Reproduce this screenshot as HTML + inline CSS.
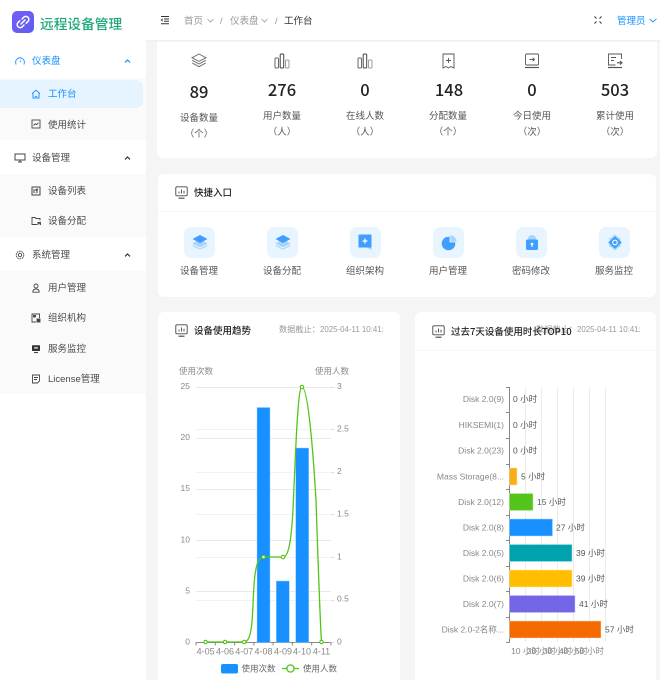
<!DOCTYPE html>
<html lang="zh-CN">
<head>
<meta charset="utf-8">
<title>远程设备管理</title>
<style>
*{box-sizing:border-box}
html,body{margin:0;padding:0}
body{width:660px;height:680px;overflow:hidden;position:relative;background:#fff;font-family:"Liberation Sans","Noto Sans CJK SC",sans-serif;font-size:9.5px;color:#4a4a4a}
.a{position:absolute}
.t{position:absolute;white-space:nowrap;line-height:14px;height:14px;margin-top:2px}
.c{position:absolute;white-space:nowrap;line-height:14px;height:14px;width:80px;text-align:center;margin-top:2px}
.card{position:absolute;background:#fff;border-radius:6px}
.q{position:absolute;top:227px;width:31px;height:31px;border-radius:7px;background:#e8f5ff}
svg{position:absolute;overflow:visible}
.num{position:absolute;width:80px;text-align:center;font-size:16.5px;line-height:20px;color:#222;font-weight:500;font-family:"Noto Sans CJK SC","Liberation Sans",sans-serif}
.lb{color:#555}
.bold{font-weight:500;color:#222;font-family:"Noto Sans CJK SC","Liberation Sans",sans-serif}
.d{font-size:7.9px}
</style>
</head>
<body>
<!-- main bg -->
<div class="a" style="left:146px;top:0;width:514px;height:680px;background:#f5f5f5"></div>
<!-- header -->
<div class="a" style="left:146px;top:0;width:514px;height:41px;background:#fff;border-bottom:1px solid #f0f0f0"></div>

<!-- sidebar -->
<div class="a" style="left:0;top:78px;width:146px;height:62px;background:#fafafa"></div>
<div class="a" style="left:0;top:174px;width:146px;height:63px;background:#fafafa"></div>
<div class="a" style="left:0;top:271px;width:146px;height:123px;background:#fafafa"></div>
<div class="a" style="left:0;top:80px;width:143px;height:28px;background:#e6f4ff;border-radius:0 7px 7px 0"></div>

<!-- logo -->
<div class="a" style="left:12px;top:11px;width:22px;height:22px;border-radius:5px;background:linear-gradient(135deg,#7a5cf5,#5a5ff0)"></div>
<svg style="left:12px;top:11px" width="22" height="22" viewBox="0 0 22 22" fill="none" stroke="#fff" stroke-width="1.5" stroke-linecap="round"><path d="M10 8l2-2a3 3 0 0 1 4.2 4.2l-2 2"/><path d="M12 14l-2 2a3 3 0 0 1-4.2-4.2l2-2"/><path d="M9 13l4-4"/></svg>
<div class="t" style="left:40px;top:14px;font-size:13.7px;font-weight:500;color:#1fa878;font-family:'Noto Sans CJK SC',sans-serif">远程设备管理</div>

<!-- sidebar icons -->
<svg style="left:15px;top:56px" width="10" height="10" viewBox="0 0 10 10" fill="none" stroke="#1890ff" stroke-width=".9"><path d="M1.2 8.500A4.400 4.400 0 1 1 8.800 8.500"/><path d="M5 6l1.200-1.600"/></svg>
<div class="t" style="left:32px;top:53px;color:#1890ff">仪表盘</div>
<svg style="left:124px;top:59px" width="7" height="4" viewBox="0 0 7 4" fill="none" stroke="#1890ff" stroke-width="1.200"><path d="M1 3.400L3.500 1 6 3.400"/></svg>

<svg style="left:31px;top:89px" width="10" height="10" viewBox="0 0 10 10" fill="none" stroke="#1890ff" stroke-width=".9"><path d="M1 4.600L5 1.200l4 3.400"/><path d="M2 4.400V9h6V4.400"/><path d="M3.800 7.400h2.400"/></svg>
<div class="t" style="left:48px;top:86px;color:#1890ff">工作台</div>

<svg style="left:31px;top:119px" width="10" height="10" viewBox="0 0 10 10" fill="none" stroke="#444" stroke-width=".9"><rect x="1" y="1" width="8" height="8"/><path d="M2.500 6.500l1.800-1.800 1.300 1L7.500 3.800"/></svg>
<div class="t" style="left:48px;top:117px">使用统计</div>

<svg style="left:14px;top:153px" width="12" height="10" viewBox="0 0 12 10" fill="none" stroke="#444" stroke-width="1"><rect x="1" y="1" width="10" height="6"/><path d="M6 7v2M4 9h4"/></svg>
<div class="t" style="left:32px;top:150px">设备管理</div>
<svg style="left:124px;top:156px" width="7" height="4" viewBox="0 0 7 4" fill="none" stroke="#333" stroke-width="1.200"><path d="M1 3.400L3.500 1 6 3.400"/></svg>

<svg style="left:31px;top:186px" width="10" height="10" viewBox="0 0 10 10" fill="none" stroke="#444" stroke-width="1"><rect x="1" y="1" width="8" height="8"/><path d="M3 3v4M5 3v2M7 3h-1v4M5 7h-.5"/></svg>
<div class="t" style="left:48px;top:183px">设备列表</div>

<svg style="left:31px;top:216px" width="11" height="10" viewBox="0 0 11 10" fill="none" stroke="#444" stroke-width=".9"><path d="M6 8.500H1v-7h3l1 1h4v2"/><path d="M7 9V6.500h2.500V9M7 7.700h2.500"/></svg>
<div class="t" style="left:48px;top:213px">设备分配</div>

<svg style="left:15px;top:250px" width="10" height="10" viewBox="0 0 10 10" fill="none" stroke="#444" stroke-width=".9"><circle cx="5" cy="5" r="1.700"/><circle cx="5" cy="5" r="3.800" stroke-dasharray="1.700 .7"/></svg>
<div class="t" style="left:32px;top:247px">系统管理</div>
<svg style="left:124px;top:253px" width="7" height="4" viewBox="0 0 7 4" fill="none" stroke="#333" stroke-width="1.200"><path d="M1 3.400L3.500 1 6 3.400"/></svg>

<svg style="left:31px;top:283px" width="10" height="10" viewBox="0 0 10 10" fill="none" stroke="#444" stroke-width=".9"><circle cx="5" cy="3" r="2"/><path d="M1.800 9.200c0-2 1.200-3.200 3.200-3.200s3.200 1.200 3.200 3.200z"/></svg>
<div class="t" style="left:48px;top:280px">用户管理</div>

<svg style="left:31px;top:313px" width="10" height="10" viewBox="0 0 10 10" fill="none" stroke="#444" stroke-width=".9"><path d="M5 9H1V1h7.500v4"/><rect x="2.500" y="2.500" width="2" height="1.500" fill="#444"/><rect x="6" y="6" width="3" height="3" fill="#444"/></svg>
<div class="t" style="left:48px;top:310px">组织机构</div>

<svg style="left:31px;top:344px" width="10" height="10" viewBox="0 0 10 10"><rect x="1" y="1.200" width="8" height="5.800" rx=".6" fill="#333"/><rect x="3.200" y="3.300" width="3.600" height="1.200" fill="#fff"/><path d="M3 8.600h4" stroke="#333" stroke-width="1"/></svg>
<div class="t" style="left:48px;top:341px">服务监控</div>

<svg style="left:31px;top:374px" width="10" height="10" viewBox="0 0 10 10" fill="none" stroke="#444" stroke-width=".9"><path d="M6.500 9H1.500V1h7v6z"/><path d="M3 3.500h4M3 5.500h3"/></svg>
<div class="t" style="left:48px;top:371px">License管理</div>

<!-- header content -->
<svg style="left:160px;top:15px" width="10" height="10" viewBox="0 0 10 10" fill="none" stroke="#333" stroke-width="1"><path d="M1 1.500h8M4 4h5M4 6.300h5M1 8.800h8"/><path d="M2.800 3.800L1.200 5l1.600 1.200" stroke-width=".8"/></svg>
<div class="t" style="left:184px;top:13px;color:#999">首页</div>
<svg style="left:207px;top:18px" width="7" height="5" viewBox="0 0 7 5" fill="none" stroke="#999" stroke-width=".8"><path d="M.5 1L3.500 4l3-3"/></svg>
<div class="t" style="left:220px;top:13px;color:#999">/</div>
<div class="t" style="left:230px;top:13px;color:#999">仪表盘</div>
<svg style="left:261px;top:18px" width="7" height="5" viewBox="0 0 7 5" fill="none" stroke="#999" stroke-width=".8"><path d="M.5 1L3.500 4l3-3"/></svg>
<div class="t" style="left:275px;top:13px;color:#999">/</div>
<div class="t" style="left:284px;top:13px;color:#333">工作台</div>
<svg style="left:594px;top:16px" width="8" height="8" viewBox="0 0 8 8" fill="none" stroke="#333" stroke-width="1"><path d="M.5 .5L2.500 2.500M7.500 .5L5.500 2.500M7.500 7.500L5.500 5.500M.5 7.500L2.500 5.500"/></svg>
<div class="t" style="left:617px;top:13px;color:#1890ff">管理员</div>
<svg style="left:649px;top:18px" width="8" height="5" viewBox="0 0 8 5" fill="none" stroke="#1890ff" stroke-width=".9"><path d="M.5 .8L4 4 7.500 .8"/></svg>

<!-- stats card -->
<div class="card" style="left:157px;top:42px;width:500px;height:116px;border-radius:0 0 6px 6px"></div>
<svg style="left:191px;top:53px" width="16" height="16" viewBox="0 0 16 16" fill="none" stroke="#666" stroke-width=".9"><path d="M8 1l7 3.700-7 3.700-7-3.700z"/><path d="M1.200 7.300L8 11l6.800-3.700"/><path d="M1.200 10L8 13.700 14.800 10"/></svg>
<svg style="left:274px;top:53px" width="16" height="16" viewBox="0 0 16 16" fill="none" stroke="#666" stroke-width="1"><rect x="1" y="5" width="3.500" height="10" rx="1"/><rect x="6.200" y="1" width="3.500" height="14" rx="1" stroke="#444"/><rect x="11.500" y="7" width="3.500" height="8" rx="1" stroke="#999"/></svg>
<svg style="left:357px;top:53px" width="16" height="16" viewBox="0 0 16 16" fill="none" stroke="#666" stroke-width="1"><rect x="1" y="5" width="3.500" height="10" rx="1"/><rect x="6.200" y="1" width="3.500" height="14" rx="1" stroke="#444"/><rect x="11.500" y="7" width="3.500" height="8" rx="1" stroke="#999"/></svg>
<svg style="left:441px;top:53px" width="15" height="16" viewBox="0 0 15 16" fill="none" stroke="#555" stroke-width=".9"><path d="M2 1h11v14l-3-1.500-2.500 1.500-2.500-1.500L2 15z"/><path d="M7.500 5v5M5 7.500h5"/></svg>
<svg style="left:524px;top:53px" width="16" height="16" viewBox="0 0 16 16" fill="none" stroke="#555" stroke-width=".9"><rect x="1.500" y="1" width="13" height="11" rx="1"/><path d="M1 14.500h14" stroke-width="1.200"/><path d="M5.500 6.500h5M8.700 4.700l1.800 1.800-1.800 1.800"/></svg>
<svg style="left:607px;top:53px" width="16" height="16" viewBox="0 0 16 16" fill="none" stroke="#555" stroke-width=".9"><path d="M14.500 6V1h-13v11h7"/><path d="M1 14.500h14" stroke-width="1.200"/><path d="M4 4.500h5M4 7.500h3"/><path d="M10 9.800h5M13 8l2 1.800-2 1.800" stroke-width="1.100"/></svg>

<div class="num" style="left:159px;top:81px">89</div>
<div class="num" style="left:242px;top:79px">276</div>
<div class="num" style="left:325px;top:79px">0</div>
<div class="num" style="left:409px;top:79px">148</div>
<div class="num" style="left:492px;top:79px">0</div>
<div class="num" style="left:575px;top:79px">503</div>

<div class="c lb" style="left:159px;top:110px">设备数量</div><div class="c lb" style="left:159px;top:126px">（个）</div>
<div class="c lb" style="left:242px;top:108px">用户数量</div><div class="c lb" style="left:242px;top:124px">（人）</div>
<div class="c lb" style="left:325px;top:108px">在线人数</div><div class="c lb" style="left:325px;top:124px">（人）</div>
<div class="c lb" style="left:408px;top:108px">分配数量</div><div class="c lb" style="left:408px;top:124px">（个）</div>
<div class="c lb" style="left:492px;top:108px">今日使用</div><div class="c lb" style="left:492px;top:124px">（次）</div>
<div class="c lb" style="left:575px;top:108px">累计使用</div><div class="c lb" style="left:575px;top:124px">（次）</div>

<!-- quick card -->
<div class="card" style="left:158px;top:174px;width:498px;height:123px"></div>
<div class="a" style="left:158px;top:211px;width:498px;height:1px;background:#f7f7f7"></div>
<svg style="left:175px;top:186px" width="13" height="13" viewBox="0 0 13 13" fill="none" stroke="#444" stroke-width=".9"><rect x=".8" y=".8" width="11.400" height="9" rx="1.200"/><path d="M3.500 12.200h6" stroke-width="1.100"/><path d="M4 7.500V5.500M6.500 7.500V3.500M9 7.500V4.800"/></svg>
<div class="t bold" style="left:194px;top:183px">快捷入口</div>

<div class="q" style="left:184px"></div>
<div class="q" style="left:267px"></div>
<div class="q" style="left:350px"></div>
<div class="q" style="left:433px"></div>
<div class="q" style="left:516px"></div>
<div class="q" style="left:599px"></div>

<svg style="left:192px;top:234px" width="16" height="17" viewBox="0 0 16 17"><path d="M8 3L15 10 8 13.500 1 10z" fill="#a9d4fb"/><path d="M8 1l7.500 4L8 9 .5 5z" fill="#3f9eff"/><path d="M.8 8.800L8 12.500l7.200-3.700M.8 11.500L8 15.200l7.200-3.700" fill="none" stroke="#a9d4fb" stroke-width="1"/></svg>
<svg style="left:275px;top:234px" width="16" height="17" viewBox="0 0 16 17"><path d="M8 3L15 10 8 13.500 1 10z" fill="#a9d4fb"/><path d="M8 1l7.500 4L8 9 .5 5z" fill="#3f9eff"/><path d="M.8 8.800L8 12.500l7.200-3.700M.8 11.500L8 15.200l7.200-3.700" fill="none" stroke="#a9d4fb" stroke-width="1"/></svg>
<svg style="left:358px;top:234px" width="14" height="17" viewBox="0 0 14 17"><path d="M.5 1.500a1 1 0 0 1 1-1h11a1 1 0 0 1 1 1v14.500l-4-2.500H.5z" fill="#3f9eff"/><path d="M6 13.500h7.500V16l-4-2.500z" fill="#a9d4fb"/><path d="M7 4.500v5M4.500 7h5" stroke="#fff" stroke-width="1.300"/></svg>
<svg style="left:441px;top:234px" width="17" height="17" viewBox="0 0 17 17"><circle cx="7.500" cy="9.500" r="6.800" fill="#3f9eff"/><path d="M9 1a6.800 6.800 0 0 1 7 7H9z" fill="#a9d4fb" stroke="#e8f5ff" stroke-width=".8"/></svg>
<svg style="left:525px;top:234px" width="14" height="17" viewBox="0 0 14 17"><path d="M3 7V5a4 4 0 0 1 8 0v2z" fill="#a9d4fb"/><rect x="1" y="5.500" width="12" height="10.500" rx="1.500" fill="#3f9eff"/><circle cx="7" cy="10" r="1.300" fill="#fff"/><path d="M7 10v3" stroke="#fff" stroke-width="1"/></svg>
<svg style="left:606px;top:234px" width="18" height="17" viewBox="0 0 18 17"><path d="M9 .5l4 3.500h1.500v9H13l-4 3.500L5 13H3.500V4H5z" fill="#a9d4fb"/><path d="M9 2.200L15.800 8.500 9 14.800 2.200 8.500z" fill="#3f9eff"/><circle cx="9" cy="8.500" r="2.300" fill="none" stroke="#fff" stroke-width="1.100"/></svg>

<div class="c lb" style="left:159px;top:263px">设备管理</div>
<div class="c lb" style="left:242px;top:263px">设备分配</div>
<div class="c lb" style="left:325px;top:263px">组织架构</div>
<div class="c lb" style="left:408px;top:263px">用户管理</div>
<div class="c lb" style="left:491px;top:263px">密码修改</div>
<div class="c lb" style="left:574px;top:263px">服务监控</div>

<!-- chart cards -->
<div class="card" style="left:158px;top:312px;width:242px;height:380px"></div>
<div class="card" style="left:415px;top:312px;width:241px;height:380px"></div>
<div class="a" style="left:415px;top:350px;width:241px;height:1px;background:#f7f7f7"></div>

<svg style="left:175px;top:324px" width="13" height="13" viewBox="0 0 13 13" fill="none" stroke="#444" stroke-width=".9"><rect x=".8" y=".8" width="11.400" height="9" rx="1.200"/><path d="M3.500 12.200h6" stroke-width="1.100"/><path d="M4 7.500V5.500M6.500 7.500V3.500M9 7.500V4.800"/></svg>
<div class="t bold" style="left:194px;top:321px">设备使用趋势</div>
<div class="t" style="left:279px;top:321px;color:#999;font-size:8.200px">数据截止：<span class="d">2025-04-11 10:41:</span></div>

<svg style="left:432px;top:325px" width="13" height="13" viewBox="0 0 13 13" fill="none" stroke="#444" stroke-width=".9"><rect x=".8" y=".8" width="11.400" height="9" rx="1.200"/><path d="M3.500 12.200h6" stroke-width="1.100"/><path d="M4 7.500V5.500M6.500 7.500V3.500M9 7.500V4.800"/></svg>
<div class="t" style="left:536px;top:321px;color:#999;font-size:8.200px">数据截止：<span class="d">2025-04-11 10:41:</span></div>
<div class="t bold" style="left:451px;top:322px">过去7天设备使用时长TOP10</div>

<!-- charts -->
<svg style="left:0;top:0" width="660" height="680" font-family="'Liberation Sans','Noto Sans CJK SC',sans-serif" font-size="8.500">
  <g stroke="#e6e9f0" stroke-width="1" fill="none">
    <path d="M196 387.500H331M196 438.500H331M196 489.500H331M196 540.500H331M196 591.500H331"/>
  </g>
  <g stroke="#f0f2f6" stroke-width="1" fill="none">
    <path d="M196 429.500H331M196 472.500H331M196 514.500H331M196 557.500H331M196 600.500H331"/>
  </g>
  <path d="M196 642.500H331M196 642.500v3M215.300 642.500v3M234.600 642.500v3M253.900 642.500v3M273.100 642.500v3M292.400 642.500v3M311.700 642.500v3M331 642.500v3" stroke="#888" stroke-width="1" fill="none"/>
  <path d="M331 387.500h3M331 429.500h3M331 472.500h3M331 514.500h3M331 557.500h3M331 600.500h3M331 642.500h3" stroke="#ddd" stroke-width="1" fill="none"/>
  <g fill="#1890ff" stroke="#8fd0ff" stroke-width=".5">
    <rect x="257" y="407.500" width="13" height="235"/>
    <rect x="276.300" y="581" width="13" height="61.500"/>
    <rect x="295.700" y="448" width="13" height="194.500"/>
  </g>
  <path d="M205.600 642L244 642C250 642 252 630 253 605C254 575 256 557 263.500 557L283 557C288 557 291 545 293 510C296 440 298 387 302 387C308 387 313 450 316 500C318 560 320 620 321.500 642" fill="none" stroke="#52c41a" stroke-width="1.300"/>
  <g fill="#fff" stroke="#52c41a" stroke-width="1.100">
    <circle cx="205.600" cy="642" r="1.700"/><circle cx="225" cy="642" r="1.700"/><circle cx="244.300" cy="642" r="1.700"/>
    <circle cx="263.500" cy="557" r="1.700"/><circle cx="283" cy="557" r="1.700"/><circle cx="302" cy="387" r="1.700"/><circle cx="321.500" cy="642" r="1.700"/>
  </g>
  <g fill="#888" text-anchor="end">
    <text x="190" y="389">25</text><text x="190" y="440">20</text><text x="190" y="491">15</text><text x="190" y="542.500">10</text><text x="190" y="593.500">5</text><text x="190" y="644.500">0</text>
  </g>
  <g fill="#888">
    <text x="337" y="389">3</text><text x="337" y="431.500">2.5</text><text x="337" y="474">2</text><text x="337" y="516.500">1.5</text><text x="337" y="559.500">1</text><text x="337" y="601.500">0.5</text><text x="337" y="644.500">0</text>
    <text x="179" y="374">使用次数</text><text x="315" y="374">使用人数</text>
  </g>
  <g fill="#888" text-anchor="middle" font-size="9">
    <text x="205.600" y="654.500">4-05</text><text x="225" y="654.500">4-06</text><text x="244.300" y="654.500">4-07</text><text x="263.500" y="654.500">4-08</text><text x="283" y="654.500">4-09</text><text x="302" y="654.500">4-10</text><text x="321.500" y="654.500">4-11</text>
  </g>
  <rect x="221" y="664" width="17" height="9.500" rx="2" fill="#1890ff"/>
  <text x="241.500" y="671.500" fill="#666">使用次数</text>
  <path d="M282 668.500h17" stroke="#52c41a" stroke-width="1.200"/>
  <circle cx="290.500" cy="668.500" r="3.600" fill="#fff" stroke="#52c41a" stroke-width="1.300"/>
  <text x="303" y="671.500" fill="#666">使用人数</text>

  <path d="M525.500 387V642M541.500 387V642M557.500 387V642M573.500 387V642M589.500 387V642M605.500 387V642" stroke="#ececec" stroke-width="1" fill="none"/>
  <path d="M509.500 387V642.500" stroke="#888" stroke-width="1" fill="none"/>
  <path d="M506 387.500h3.500M506 412.500h3.500M506 438.500h3.500M506 464.500h3.500M506 489.500h3.500M506 515.500h3.500M506 540.500h3.500M506 566.500h3.500M506 591.500h3.500M506 617.500h3.500M506 642.500h3.500" stroke="#888" stroke-width="1" fill="none"/>
  <g stroke-width=".5">
    <rect x="509.500" y="468" width="7.500" height="17" fill="#faad14" stroke="#ffe6a8"/>
    <rect x="509.500" y="493.500" width="23.500" height="17" fill="#52c41a" stroke="#c8f0a8"/>
    <rect x="509.500" y="519" width="43" height="17" fill="#1890ff" stroke="#b0dcff"/>
    <rect x="509.500" y="544.500" width="62.500" height="17" fill="#00a2ae" stroke="#a8e8ee"/>
    <rect x="509.500" y="570" width="62.500" height="17" fill="#ffbf00" stroke="#ffe8a0"/>
    <rect x="509.500" y="595.500" width="65.500" height="17" fill="#7265e6" stroke="#cdc8f8"/>
    <rect x="509.500" y="621" width="91.500" height="17" fill="#f56a00" stroke="#ffd8b0"/>
  </g>
  <g fill="#888" text-anchor="end">
    <text x="504" y="402">Disk 2.0(9)</text><text x="504" y="428">HIKSEMI(1)</text><text x="504" y="453.500">Disk 2.0(23)</text>
    <text x="504" y="479.500">Mass Storage(8...</text><text x="504" y="505">Disk 2.0(12)</text><text x="504" y="530.500">Disk 2.0(8)</text>
    <text x="504" y="556">Disk 2.0(5)</text><text x="504" y="581.500">Disk 2.0(6)</text><text x="504" y="607">Disk 2.0(7)</text><text x="504" y="632.500">Disk 2.0-2名称...</text>
  </g>
  <g fill="#555">
    <text x="513" y="402">0 小时</text><text x="513" y="428">0 小时</text><text x="513" y="453.500">0 小时</text>
    <text x="521" y="479.500">5 小时</text><text x="537" y="505">15 小时</text><text x="556" y="530.500">27 小时</text>
    <text x="576" y="556">39 小时</text><text x="576" y="581.500">39 小时</text><text x="579" y="607">41 小时</text><text x="605" y="632.500">57 小时</text>
  </g>
  <g fill="#888" text-anchor="middle">
    <text x="525.500" y="654">10 小时</text><text x="541.500" y="654">20 小时</text><text x="557.500" y="654">30 小时</text><text x="573.500" y="654">40 小时</text><text x="589.500" y="654">50 小时</text>
  </g>
</svg>
</body>
</html>
